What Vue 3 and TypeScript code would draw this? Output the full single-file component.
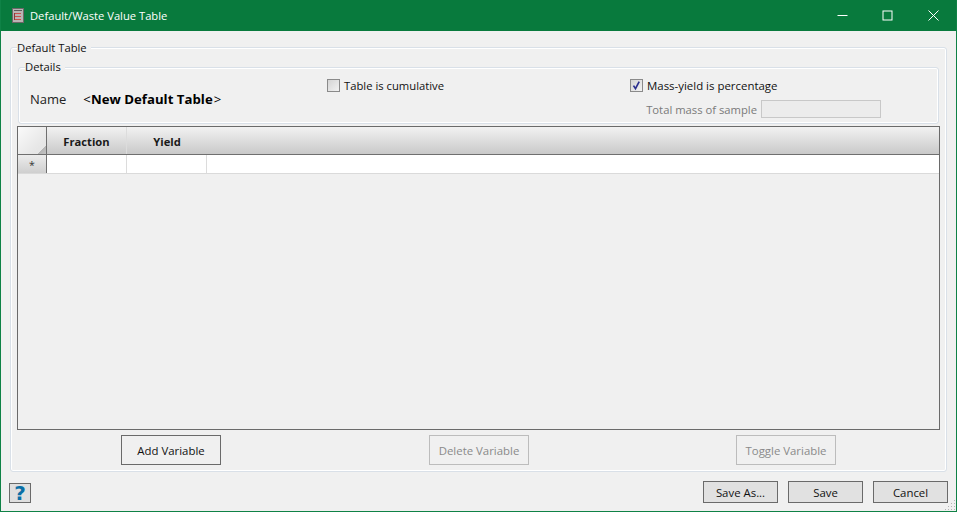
<script setup lang="ts">
const columns: string[] = ['Fraction', 'Yield'];
const actions = [
  { label: 'Add Variable', disabled: false },
  { label: 'Delete Variable', disabled: true },
  { label: 'Toggle Variable', disabled: true },
];
const footer: string[] = ['Save As...', 'Save', 'Cancel'];
const grip: number[][] = [[10, 1], [7, 4], [10, 4], [4, 7], [7, 7], [10, 7], [1, 10], [4, 10], [7, 10], [10, 10]];
</script>

<template>
  <div class="window">
    <header class="titlebar">
      <svg class="app-icon" width="12" height="15" viewBox="0 0 12 15">
        <rect x="0.5" y="0.5" width="11" height="14" fill="#b9b4b4" stroke="#6d6868" />
        <rect x="2" y="2" width="8" height="1" fill="#5d5a5a" />
        <path d="M3 5h6v1H3zM3 8h6v1H3zM3 11h6v1H3z" fill="#c9504c" />
        <path d="M2 5h1v7H2z" fill="#8a3a3a" />
      </svg>
      <span class="title">Default/Waste Value Table</span>
      <div class="controls">
        <span class="control">
          <svg width="11" height="11" viewBox="0 0 11 11"><path d="M0.5 5.5h10" stroke="#fff" /></svg>
        </span>
        <span class="control control-max">
          <svg width="11" height="11" viewBox="0 0 11 11"><rect x="1" y="1" width="9" height="9" fill="none" stroke="#fff" /></svg>
        </span>
        <span class="control">
          <svg width="11" height="11" viewBox="0 0 11 11"><path d="M0.5 0.5l10 10M10.5 0.5l-10 10" stroke="#fff" /></svg>
        </span>
      </div>
    </header>

    <main class="body">
      <section class="group outer">
        <span class="legend legend-outer">Default Table</span>
        <section class="group details">
          <span class="legend legend-details">Details</span>
          <div class="name-col">
            <span class="name-label">Name</span>
            <span class="name-value">&lt;<b>New Default Table</b>&gt;</span>
          </div>
          <div class="cum-col">
            <label class="check">
              <span class="box"></span>
              <span>Table is cumulative</span>
            </label>
          </div>
          <div class="mass-col">
            <label class="check">
              <span class="box">
                <svg width="11" height="11" viewBox="0 0 11 11"><path d="M2.5 5.6l2 3L8.2 1.6" fill="none" stroke="#2b2f8f" stroke-width="1.7" /></svg>
              </span>
              <span class="mass-text">Mass-yield is percentage</span>
            </label>
            <div class="total">
              <span class="total-label">Total mass of sample</span>
              <span class="total-input"></span>
            </div>
          </div>
        </section>

        <div class="table">
          <div class="thead">
            <div class="corner"></div>
            <div v-for="c in columns" :key="c" class="th">{{ c }}</div>
            <div class="th-fill"></div>
          </div>
          <div class="row">
            <div class="row-head">*</div>
            <div class="td"></div>
            <div class="td"></div>
          </div>
        </div>

        <div class="actions">
          <div v-for="a in actions" :key="a.label" class="action-cell">
            <button class="action" :class="{ disabled: a.disabled }">{{ a.label }}</button>
          </div>
        </div>
      </section>

      <footer class="footer">
        <button class="help">?</button>
        <div class="footer-buttons">
          <button v-for="f in footer" :key="f" class="foot-btn">{{ f }}</button>
        </div>
      </footer>
    </main>

    <svg class="grip" width="12" height="12" viewBox="0 0 12 12">
      <rect v-for="(p, i) in grip" :key="i" :x="p[0]" :y="p[1]" width="1" height="1" fill="#b4b4b4" />
    </svg>
  </div>
</template>

<style scoped>
.window {
  position: relative;
  box-sizing: border-box;
  width: 957px;
  height: 512px;
  display: flex;
  flex-direction: column;
  border: 1px solid #0f8246;
  border-top: 0;
  background: #f0f0f0;
  color: #111;
  font-family: "Open Sans", "Noto Sans", sans-serif;
  font-size: 11.25px;
  overflow: hidden;
}
.titlebar {
  flex: 0 0 31px;
  display: flex;
  align-items: center;
  background: #087a3d;
  margin: 0 -1px;
  padding-left: 12px;
  color: #fff;
}
.app-icon { margin-right: 6px; }
.title { font-size: 11.2px; }
.controls { margin-left: auto; display: flex; padding-right: 1px; }
.control {
  width: 45px;
  height: 31px;
  display: flex;
  align-items: center;
  justify-content: center;
}
.control:nth-child(1) { margin-right: 1px; }
.control-max svg { margin-right: 2px; }
.body {
  flex: 1;
  display: flex;
  flex-direction: column;
  padding: 16px 9px 0;
}
.group {
  position: relative;
  box-sizing: border-box;
  border: 1px solid #d9e0e8;
  border-radius: 3px;
  box-shadow: inset 0 0 0 1px #fff;
}
.legend {
  position: absolute;
  background: #f0f0f0;
  padding: 0 3px 0 0;
  line-height: 16px;
}
.outer {
  width: 937px;
  height: 425px;
  padding: 19px 6px 0;
  display: flex;
  flex-direction: column;
}
.legend-outer { left: 6px; top: -8px; padding-right: 4px; }
.details {
  height: 57px;
  margin: 0 1px;
  padding: 11px 0 0 11px;
  display: grid;
  grid-template-columns: 297px 303px 1fr;
  align-items: start;
}
.legend-details { left: 6px; top: -9px; padding-right: 4px; }
.name-col {
  height: 39px;
  display: flex;
  align-items: center;
  gap: 17px;
}
.name-label { font-size: 13px; color: #222; }
.name-value { font-size: 13.2px; color: #000; letter-spacing: 0.02px; }
.name-value b { font-weight: 700; margin-right: 1px; }
.check { display: flex; align-items: center; gap: 4px; height: 13px; }
.mass-text { font-size: 11.45px; }
.box {
  box-sizing: border-box;
  width: 13px;
  height: 13px;
  border: 1px solid #8a8a8a;
  background: linear-gradient(135deg, #d4d4d4, #f2f2f2);
  display: flex;
  align-items: center;
  justify-content: center;
}
.total {
  display: flex;
  align-items: center;
  justify-content: flex-end;
  gap: 4px;
  margin: 8px 57px 0 0;
}
.total-label { color: #7a7a7a; }
.total-input {
  box-sizing: border-box;
  width: 120px;
  height: 18px;
  border: 1px solid #c8c8c8;
  background: #ececec;
}
.table {
  box-sizing: border-box;
  height: 304px;
  margin-top: 2px;
  border: 1px solid #6a6a6a;
}
.thead {
  display: flex;
  height: 28px;
  box-sizing: border-box;
  border-bottom: 1px solid #6f6f6f;
}
.corner {
  width: 29px;
  box-sizing: border-box;
  border-right: 1px solid #6f6f6f;
  background: linear-gradient(135deg, #fafafa 0%, #e6e6e6 75%, #e6e6e6 84%, #b4b4b4 84%, #c4c4c4 100%);
}
.th {
  width: 80px;
  box-sizing: border-box;
  border-right: 1px solid #dcdcdc;
  background: linear-gradient(#f2f2f2, #c9c9c9);
  display: flex;
  align-items: center;
  justify-content: center;
  padding-top: 2px;
  font-size: 11.2px;
  font-weight: 700;
  color: #1a1a1a;
}
.th:nth-of-type(3) { border-right: 0; }
.th-fill { flex: 1; background: linear-gradient(#f2f2f2, #c9c9c9); }
.row {
  display: flex;
  height: 19px;
  box-sizing: border-box;
  border-bottom: 1px solid #dadada;
  background: #fff;
}
.row-head {
  width: 29px;
  box-sizing: border-box;
  border-right: 1px solid #6f6f6f;
  background: linear-gradient(#ececec, #cfcfcf);
  text-align: center;
  line-height: 20px;
  font-size: 10.5px;
  color: #333;
}
.td {
  width: 80px;
  box-sizing: border-box;
  border-right: 1px solid #dcdcdc;
}
.actions {
  display: grid;
  grid-template-columns: 308px 308px 306px;
  margin-top: 5px;
}
.action-cell { display: flex; justify-content: center; }
button {
  font-family: inherit;
  font-size: 11.4px;
  padding: 0;
  color: #111;
}
.action {
  box-sizing: border-box;
  width: 100px;
  height: 30px;
  border: 1px solid #6a6a6a;
  background: #f0f0f0;
}
.action.disabled { border-color: #bcbcbc; color: #8a8a8a; }
.footer {
  display: flex;
  justify-content: space-between;
  align-items: center;
  margin-top: 9px;
  margin-right: -1px;
  margin-left: -1px;
}
.help {
  box-sizing: border-box;
  width: 22px;
  height: 20px;
  margin-top: 1px;
  border: 1px solid #6a6a6a;
  background: #dfdfdf;
  color: #0a6fa6;
  font-family: "DejaVu Sans", sans-serif;
  font-weight: 700;
  font-size: 20px;
  line-height: 18px;
}
.footer-buttons { display: flex; gap: 10px; }
.foot-btn {
  box-sizing: border-box;
  width: 75px;
  height: 22px;
  border: 1px solid #6a6a6a;
  background: #e1e1e1;
}
.grip { position: absolute; right: 0; bottom: 0; }
</style>
